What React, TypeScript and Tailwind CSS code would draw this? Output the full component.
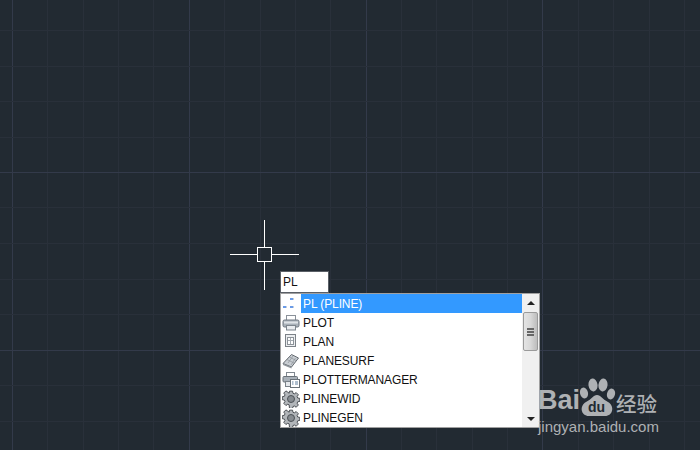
const verticalLines = [
  { x: 12, major: true },
  { x: 47 }, { x: 83 }, { x: 118 }, { x: 153 },
  { x: 189, major: true },
  { x: 224 }, { x: 260 }, { x: 295 }, { x: 330 },
  { x: 366, major: true },
  { x: 401 }, { x: 436 }, { x: 472 }, { x: 507 },
  { x: 542, major: true },
  { x: 578 }, { x: 613 }, { x: 649 }, { x: 684 },
];

const horizontalLines = [
  { y: 30 }, { y: 66 }, { y: 101 }, { y: 137 },
  { y: 172, major: true },
  { y: 207 }, { y: 243 }, { y: 279 }, { y: 314 },
  { y: 350, major: true },
  { y: 385 }, { y: 421 },
];

// 作図エリアのグリッド
const Grid = () => (
  <svg className="absolute inset-0" width="700" height="450" shapeRendering="crispEdges">
    {verticalLines.map((l) => (
      <line key={l.x} x1={l.x + 0.5} x2={l.x + 0.5} y1="0" y2="450" stroke={l.major ? "#333a4a" : "#29303a"} />
    ))}
    {horizontalLines.map((l) => (
      <line key={l.y} x1="0" x2="700" y1={l.y + 0.5} y2={l.y + 0.5} stroke={l.major ? "#333a4a" : "#29303a"} />
    ))}
  </svg>
);

const Crosshair = () => (
  <svg className="absolute left-[229px] top-[220px]" width="71" height="70" shapeRendering="crispEdges">
    <path d="M35.5 0V27M35.5 42V70M1 34.5H28M43 34.5H70" stroke="#fff" fill="none" />
    <rect x="28.5" y="27.5" width="14" height="14" stroke="#fff" fill="none" />
  </svg>
);

const PointsIcon = () => (
  <svg width="18" height="18" viewBox="0 0 18 18" shapeRendering="crispEdges">
    <rect x="8" y="3" width="3" height="2" fill="#6a9be8" />
    <rect x="11" y="3" width="1" height="2" fill="#c8d2dc" />
    <rect x="1" y="11" width="3" height="2" fill="#6a9be8" />
    <rect x="4" y="11" width="1" height="2" fill="#c8d2dc" />
    <rect x="8" y="11" width="3" height="2" fill="#6a9be8" />
    <rect x="11" y="11" width="1" height="2" fill="#c8d2dc" />
  </svg>
);

const PrinterIcon = () => (
  <svg width="18" height="18" viewBox="0 0 18 18">
    <rect x="4.5" y="1.5" width="9" height="5" fill="#fff" stroke="#8a9199" />
    <rect x="1" y="6" width="16" height="7" rx="1.500" fill="#a9b1b9" stroke="#6f7780" />
    <rect x="2" y="7.500" width="14" height="2" fill="#dfe3e7" />
    <rect x="4.5" y="11.5" width="9" height="4.500" fill="#e9ecef" stroke="#7d858d" />
  </svg>
);

const PlanIcon = () => (
  <svg width="18" height="18" viewBox="0 0 18 18" shapeRendering="crispEdges">
    <rect x="3.5" y="1.5" width="10" height="12" fill="#eceef0" stroke="#7c8288" />
    <rect x="5.5" y="4.5" width="6" height="7" fill="#fff" stroke="#8d9399" />
    <path d="M8.5 5V11M6 7.5H11" stroke="#a5abb1" />
  </svg>
);

const SurfIcon = () => (
  <svg width="18" height="18" viewBox="0 0 18 18">
    <path d="M1 11.5L9.5 2.5L16.5 6L9.5 15Z" fill="#c9ced3" stroke="#63696f" />
    <path d="M5 7.5L12 11M7.5 5L14 8.5M6 11L11 4M9 13L13.5 6" stroke="#8c9298" strokeWidth="0.7" />
    <path d="M1 11.5L9.5 15L9.5 16.5L1 13Z" fill="#8f959b" />
  </svg>
);

const PlotterIcon = () => (
  <svg width="18" height="18" viewBox="0 0 18 18">
    <rect x="4.5" y="1.5" width="8" height="4" fill="#fff" stroke="#808890" />
    <rect x="1" y="5.500" width="14.500" height="5.500" rx="1" fill="#a9b1b9" stroke="#6a7279" />
    <rect x="3.5" y="10.5" width="5" height="5" fill="#e6e9ec" stroke="#7a8289" />
    <rect x="8.5" y="8.5" width="9" height="8" fill="#fff" stroke="#6a7279" />
    <path d="M10 11H11.5M13 11H16M10 13H11.5M13 13H16" stroke="#5e7f9f" />
  </svg>
);

const GearIcon = () => (
  <svg width="18" height="18" viewBox="0 0 18 18">
    <path
      d="M7.400 .700h3.200l.4 2.200 1.500.6 1.900-1.300 2.300 2.300-1.300 1.900.6 1.500 2.200.4v3.200l-2.200.4-.6 1.500 1.300 1.900-2.300 2.300-1.900-1.300-1.500.6-.4 2.200H7.400L7 15.100l-1.500-.6-1.900 1.300-2.300-2.300 1.300-1.900-.6-1.500-2.200-.4V6.500l2.200-.4.600-1.500-1.300-1.900 2.300-2.300 1.900 1.300L7 2.900Z"
      transform="translate(0.500 0.500) scale(0.950)"
      fill="#b2b6ba"
      stroke="#45494e"
      strokeWidth="1"
    />
    <circle cx="9" cy="9" r="3.500" fill="#868b90" stroke="#4d5257" />
  </svg>
);

const commands = [
  { name: "PL (PLINE)", icon: <PointsIcon />, selected: true },
  { name: "PLOT", icon: <PrinterIcon /> },
  { name: "PLAN", icon: <PlanIcon /> },
  { name: "PLANESURF", icon: <SurfIcon /> },
  { name: "PLOTTERMANAGER", icon: <PlotterIcon /> },
  { name: "PLINEWID", icon: <GearIcon /> },
  { name: "PLINEGEN", icon: <GearIcon /> },
];

const Scrollbar = () => (
  <div className="flex h-full w-[17px] flex-col items-center bg-[#f0f0f0]">
    <div className="flex h-[17px] w-full items-center justify-center">
      <div className="h-0 w-0 border-x-[4px] border-b-[4px] border-x-transparent border-b-[#222]" />
    </div>
    <div className="mt-[1px] flex h-[39px] w-[15px] flex-col items-center justify-center gap-[1px] rounded-[2px] border border-[#9a9a9a] bg-gradient-to-r from-[#e4e4e4] via-[#d8d8d8] to-[#bdbdbd]">
      <div className="h-[2px] w-[7px] bg-[#666]" />
      <div className="h-[2px] w-[7px] bg-[#666]" />
      <div className="h-[2px] w-[7px] bg-[#666]" />
    </div>
    <div className="flex-1" />
    <div className="flex h-[17px] w-full items-center justify-center">
      <div className="h-0 w-0 border-x-[4px] border-t-[4px] border-x-transparent border-t-[#222]" />
    </div>
  </div>
);

const CommandList = () => (
  <div className="absolute left-[280px] top-[293px] flex h-[135px] w-[260px] border border-[#a0a0a0] bg-white font-['Liberation_Sans',sans-serif] text-[12px] text-[#111]">
    <ul className="flex-1">
      {commands.map((c) => (
        <li key={c.name} className="flex h-[19px] items-center">
          <div className="flex w-[20px] shrink-0 justify-center">{c.icon}</div>
          <div className={`flex h-full flex-1 items-center pl-[2px] tracking-[-0.1px] ${c.selected ? "bg-[#3399ff] text-white" : ""}`}>
            {c.name}
          </div>
        </li>
      ))}
    </ul>
    <Scrollbar />
  </div>
);

// 右下のウォーターマーク
const Watermark = () => (
  <div className="absolute left-[538px] top-[375px] flex w-[124px] flex-col items-start text-[#aeb1b4]">
    <div className="flex h-[42px] items-end">
      <span className="font-['Liberation_Sans',sans-serif] text-[27px] leading-[34px] font-bold">Bai</span>
      <svg width="38" height="40" viewBox="0 0 38 40" className="mb-[-1px] ml-[-2px] shrink-0">
        <ellipse cx="6" cy="15" rx="4" ry="5.500" fill="#aeb1b4" transform="rotate(-15 6 15)" />
        <ellipse cx="15" cy="7" rx="4.500" ry="6.500" fill="#aeb1b4" transform="rotate(-8 15 7)" />
        <ellipse cx="25" cy="7" rx="4.500" ry="6.500" fill="#aeb1b4" transform="rotate(8 25 7)" />
        <ellipse cx="33" cy="16" rx="4" ry="5.500" fill="#aeb1b4" transform="rotate(15 33 16)" />
        <path d="M19 17C15 17 14 21 8 24C1 28 3 38 11 38C15 38 23 38 27 38C35 38 37 28 30 24C24 21 23 17 19 17Z" fill="#aeb1b4" />
        <text x="18.500" y="34" textAnchor="middle" fontSize="14" fontWeight="700" fontFamily="Liberation Sans" fill="#222a32">du</text>
      </svg>
      <span className="font-['Noto_Sans_CJK_SC',sans-serif] text-[20.500px] leading-[28px] font-medium whitespace-nowrap">经验</span>
    </div>
    <div className="mt-[2px] font-['Liberation_Sans',sans-serif] text-[15px] leading-[16px] whitespace-nowrap">jingyan.baidu.com</div>
  </div>
);

const App = () => {
  return (
    <div className="relative h-[450px] w-[700px] overflow-hidden bg-[#222a32]">
      <Grid />
      <Crosshair />

      {/* コマンド入力 */}
      <div className="absolute left-[280px] top-[271px] flex h-[22px] w-[49px] items-center border border-[#5a5f66] bg-white pl-[2px] font-['Liberation_Sans',sans-serif] text-[12px] text-[#111]">
        PL
      </div>

      <CommandList />
      <Watermark />
    </div>
  );
};

export default App;
